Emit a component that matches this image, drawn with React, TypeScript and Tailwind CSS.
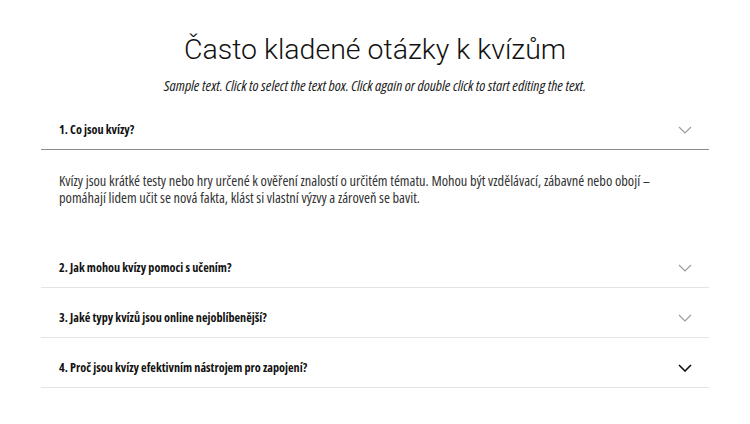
const items = [
  {
    q: '1. Co jsou kvízy?',
    a: 'Kvízy jsou krátké testy nebo hry určené k ověření znalostí o určitém tématu. Mohou být vzdělávací, zábavné nebo obojí – pomáhají lidem učit se nová fakta, klást si vlastní výzvy a zároveň se bavit.',
    open: true,
  },
  { q: '2. Jak mohou kvízy pomoci s učením?' },
  { q: '3. Jaké typy kvízů jsou online nejoblíbenější?' },
  { q: '4. Proč jsou kvízy efektivním nástrojem pro zapojení?', hover: true },
];

const Chevron = ({ dark }: { dark?: boolean }) => (
  <svg
    width="14"
    height="8"
    viewBox="0 0 14 8"
    fill="none"
    stroke={dark ? '#111111' : '#9a9a9a'}
    strokeWidth={dark ? 1.6 : 1.1}
    aria-hidden
  >
    <path d="M1 1l6 6 6-6" />
  </svg>
);

const App = () => {
  return (
    <div className="min-h-[424px] w-[750px] bg-white font-['Open_Sans','Liberation_Sans',sans-serif] text-[#111]">
      <div className="mx-auto w-[668px] pt-[30px]">
        <h1 className="text-center font-['Roboto','Liberation_Sans',sans-serif] text-[28.5px] font-light leading-[40px] text-[#111]">
          Často kladené otázky k kvízům
        </h1>
        <p className="mt-[7px] text-center text-[15px] italic leading-[16px] text-[#222] [font-stretch:75%]">
          Sample text. Click to select the text box. Click again or double click to start editing the text.
        </p>

        <div className="mt-[7px] [font-stretch:75%]">
          {items.map((it) => (
            <div key={it.q}>
              <div
                className={
                  'flex h-[50px] items-center justify-between pl-[18px] pr-[17px] pt-[10px] ' +
                  (it.open ? 'border-b border-[#8a8a8a]' : 'border-b border-[#e4e4e4]')
                }
              >
                <span className="text-[12.2px] font-bold leading-[20px] text-[#111]">{it.q}</span>
                <Chevron dark={it.hover} />
              </div>
              {it.open && (
                <div className="pb-[32px] pl-[18px] pr-[40px] pt-[23px] text-[14.4px] leading-[16.5px] text-[#333]">
                  {it.a}
                </div>
              )}
            </div>
          ))}
        </div>
      </div>
    </div>
  );
};

export default App;
